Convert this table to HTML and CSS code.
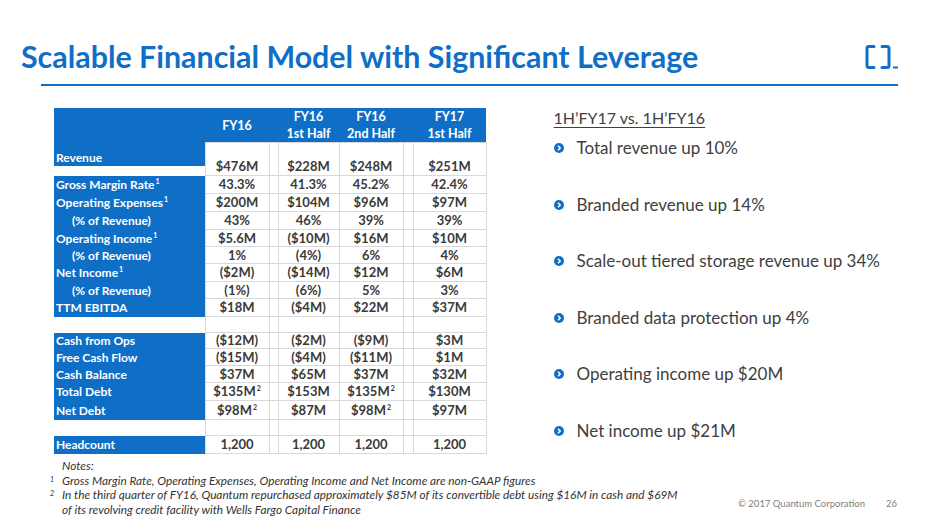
FILE: index.html
```html
<!DOCTYPE html>
<html lang="en">
<head>
<meta charset="utf-8">
<title>Scalable Financial Model with Significant Leverage</title>
<link rel="stylesheet" href="styles.css">
</head>
<body>
<div class="slide">
  <header class="top">
    <h1 class="title">Scalable Financial Model with Significant Leverage</h1>
    <svg class="logo" width="33" height="24" viewBox="0 0 33 24" aria-hidden="true">
      <path d="M9 1.5 H4 Q2 1.5 2 3.5 V20.5 Q2 22.5 4 22.5 H9" fill="none" stroke="#0f6fc6" stroke-width="3" stroke-linecap="round"/>
      <path d="M17 1.5 H22 Q24 1.5 24 3.5 V20.5 Q24 22.5 22 22.5 H17" fill="none" stroke="#0f6fc6" stroke-width="3" stroke-linecap="round"/>
      <rect x="28" y="21.5" width="5" height="2" fill="#0f6fc6"/>
    </svg>
  </header>
  <div class="rule"></div>

  <main class="content">
    <table class="fin">
      <colgroup>
        <col class="c-lbl"><col class="c-a"><col class="c-sp"><col class="c-b"><col class="c-c"><col class="c-sp2"><col class="c-d">
      </colgroup>
      <thead>
        <tr class="r-head">
          <th></th>
          <th>FY16</th>
          <th></th>
          <th>FY16<br>1st Half</th>
          <th>FY16<br>2nd Half</th>
          <th></th>
          <th>FY17<br>1st Half</th>
        </tr>
      </thead>
      <tbody>
        <tr class="r-rev">
          <td class="lbl top">Revenue</td>
          <td>$476M</td><td class="sp"></td><td>$228M</td><td>$248M</td><td class="sp"></td><td>$251M</td>
        </tr>
        <tr class="r18">
          <td class="lbl">Gross Margin Rate<sup>1</sup></td>
          <td>43.3%</td><td class="sp"></td><td>41.3%</td><td>45.2%</td><td class="sp"></td><td>42.4%</td>
        </tr>
        <tr class="r18">
          <td class="lbl">Operating Expenses<sup>1</sup></td>
          <td>$200M</td><td class="sp"></td><td>$104M</td><td>$96M</td><td class="sp"></td><td>$97M</td>
        </tr>
        <tr class="r18">
          <td class="lbl ind">(% of Revenue)</td>
          <td>43%</td><td class="sp"></td><td>46%</td><td>39%</td><td class="sp"></td><td>39%</td>
        </tr>
        <tr class="r17">
          <td class="lbl">Operating Income<sup>1</sup></td>
          <td>$5.6M</td><td class="sp"></td><td>($10M)</td><td>$16M</td><td class="sp"></td><td>$10M</td>
        </tr>
        <tr class="r17">
          <td class="lbl ind">(% of Revenue)</td>
          <td>1%</td><td class="sp"></td><td>(4%)</td><td>6%</td><td class="sp"></td><td>4%</td>
        </tr>
        <tr class="r18">
          <td class="lbl">Net Income<sup>1</sup></td>
          <td>($2M)</td><td class="sp"></td><td>($14M)</td><td>$12M</td><td class="sp"></td><td>$6M</td>
        </tr>
        <tr class="r17">
          <td class="lbl ind">(% of Revenue)</td>
          <td>(1%)</td><td class="sp"></td><td>(6%)</td><td>5%</td><td class="sp"></td><td>3%</td>
        </tr>
        <tr class="r18">
          <td class="lbl">TTM EBITDA</td>
          <td>$18M</td><td class="sp"></td><td>($4M)</td><td>$22M</td><td class="sp"></td><td>$37M</td>
        </tr>
        <tr class="r16 blank">
          <td class="lbl-blank"></td>
          <td></td><td class="sp"></td><td></td><td></td><td class="sp"></td><td></td>
        </tr>
        <tr class="r16">
          <td class="lbl">Cash from Ops</td>
          <td>($12M)</td><td class="sp"></td><td>($2M)</td><td>($9M)</td><td class="sp"></td><td>$3M</td>
        </tr>
        <tr class="r17">
          <td class="lbl">Free Cash Flow</td>
          <td>($15M)</td><td class="sp"></td><td>($4M)</td><td>($11M)</td><td class="sp"></td><td>$1M</td>
        </tr>
        <tr class="r17">
          <td class="lbl">Cash Balance</td>
          <td>$37M</td><td class="sp"></td><td>$65M</td><td>$37M</td><td class="sp"></td><td>$32M</td>
        </tr>
        <tr class="r18">
          <td class="lbl">Total Debt</td>
          <td>$135M<sup>2</sup></td><td class="sp"></td><td>$153M</td><td>$135M<sup>2</sup></td><td class="sp"></td><td>$130M</td>
        </tr>
        <tr class="r19">
          <td class="lbl">Net Debt</td>
          <td>$98M<sup>2</sup></td><td class="sp"></td><td>$87M</td><td>$98M<sup>2</sup></td><td class="sp"></td><td>$97M</td>
        </tr>
        <tr class="r16 blank">
          <td class="lbl-blank"></td>
          <td></td><td class="sp"></td><td></td><td></td><td class="sp"></td><td></td>
        </tr>
        <tr class="r18">
          <td class="lbl">Headcount</td>
          <td>1,200</td><td class="sp"></td><td>1,200</td><td>1,200</td><td class="sp"></td><td>1,200</td>
        </tr>
      </tbody>
    </table>

    <section class="points">
      <h2 class="points-head">1H’FY17 vs. 1H’FY16</h2>
      <ul class="bullets">
        <li><svg class="chev" width="10" height="10" viewBox="0 0 10 10" aria-hidden="true"><circle cx="5" cy="5" r="5" fill="#0f6fc6"/><path d="M4 2.8 L6.2 5 L4 7.2" fill="none" stroke="#fff" stroke-width="1.5"/></svg><span>Total revenue up 10%</span></li>
        <li><svg class="chev" width="10" height="10" viewBox="0 0 10 10" aria-hidden="true"><circle cx="5" cy="5" r="5" fill="#0f6fc6"/><path d="M4 2.8 L6.2 5 L4 7.2" fill="none" stroke="#fff" stroke-width="1.5"/></svg><span>Branded revenue up 14%</span></li>
        <li><svg class="chev" width="10" height="10" viewBox="0 0 10 10" aria-hidden="true"><circle cx="5" cy="5" r="5" fill="#0f6fc6"/><path d="M4 2.8 L6.2 5 L4 7.2" fill="none" stroke="#fff" stroke-width="1.5"/></svg><span>Scale-out tiered storage revenue up 34%</span></li>
        <li><svg class="chev" width="10" height="10" viewBox="0 0 10 10" aria-hidden="true"><circle cx="5" cy="5" r="5" fill="#0f6fc6"/><path d="M4 2.8 L6.2 5 L4 7.2" fill="none" stroke="#fff" stroke-width="1.5"/></svg><span>Branded data protection up 4%</span></li>
        <li><svg class="chev" width="10" height="10" viewBox="0 0 10 10" aria-hidden="true"><circle cx="5" cy="5" r="5" fill="#0f6fc6"/><path d="M4 2.8 L6.2 5 L4 7.2" fill="none" stroke="#fff" stroke-width="1.5"/></svg><span>Operating income up $20M</span></li>
        <li><svg class="chev" width="10" height="10" viewBox="0 0 10 10" aria-hidden="true"><circle cx="5" cy="5" r="5" fill="#0f6fc6"/><path d="M4 2.8 L6.2 5 L4 7.2" fill="none" stroke="#fff" stroke-width="1.5"/></svg><span>Net income up $21M</span></li>
      </ul>
    </section>
  </main>

  <footer class="bottom">
    <div class="notes">
      <p class="notes-title">Notes:</p>
      <p class="note"><span class="num">1</span><span>Gross Margin Rate, Operating Expenses, Operating Income and Net Income are non-GAAP figures</span></p>
      <p class="note"><span class="num">2</span><span>In the third quarter of FY16, Quantum repurchased approximately $85M of its convertible debt using $16M in cash and $69M of its revolving credit facility with Wells Fargo Capital Finance</span></p>
    </div>
    <div class="copy"><span>© 2017 Quantum Corporation</span><span class="page">26</span></div>
  </footer>
</div>
</body>
</html>
```

FILE: styles.css
```css
* { box-sizing: border-box; }

html, body {
  margin: 0;
  padding: 0;
  background: #ffffff;
}

.slide {
  width: 940px;
  height: 528px;
  overflow: hidden;
  font-family: Lato, "Open Sans", sans-serif;
  color: #404040;
}

.top {
  display: flex;
  justify-content: space-between;
  align-items: flex-start;
  padding: 38px 42px 0 21px;
}

.title {
  margin: 0;
  font-size: 30.4px;
  line-height: 36px;
  font-weight: 700;
  color: #0f6fc6;
  white-space: nowrap;
}

.logo {
  display: block;
  margin-top: 7px;
}

.rule {
  height: 2px;
  margin: 10px 42px 0 41px;
  background: #0f6fc6;
}

.content {
  display: flex;
  align-items: flex-start;
  padding: 22px 0 0 54px;
}

/* ---------- table ---------- */
.fin {
  width: 432px;
  table-layout: fixed;
  border-collapse: collapse;
  font-size: 13px;
  font-weight: 700;
  color: #3a3a3a;
}

.c-lbl { width: 151px; }
.c-a { width: 64px; }
.c-sp { width: 9px; }
.c-b { width: 61px; }
.c-c { width: 64px; }
.c-sp2 { width: 10px; }
.c-d { width: 73px; }

.fin th {
  background: #0f6fc6;
  color: #ffffff;
  font-size: 12.5px;
  font-weight: 700;
  text-align: center;
  line-height: 17px;
  padding: 0;
  height: 34px;
  border: none;
}

.fin td {
  padding: 0;
  text-align: center;
  border: 1px solid #d9d9d9;
  line-height: 15px;
  vertical-align: middle;
  white-space: nowrap;
}

.fin td.lbl {
  background: #0f6fc6;
  color: #ffffff;
  font-size: 12px;
  text-align: left;
  padding-left: 2px;
  border: none;
}

.fin td.lbl.ind { padding-left: 18px; }

.fin td.lbl-blank {
  background: #ffffff;
  border: none;
}

.r-rev { height: 33px; }
.r-rev td { vertical-align: bottom; padding-bottom: 1px; }
.r-rev td.lbl.top { vertical-align: top; padding-top: 7px; }

.r16 { height: 16px; }
.r17 { height: 17px; }
.r18 { height: 18px; }
.r19 { height: 19px; }

.fin sup {
  font-size: 7px;
  line-height: 0;
  vertical-align: 5px;
  margin-left: 1px;
}

/* ---------- bullets ---------- */
.points {
  margin-left: 67px;
  color: #404040;
}

.points-head {
  margin: 0;
  font-size: 16px;
  line-height: 20px;
  font-weight: 400;
  text-decoration: underline;
  text-decoration-thickness: 1px;
  text-underline-offset: 3px;
}

.bullets {
  list-style: none;
  margin: 10px 0 0 0;
  padding: 0;
  display: flex;
  flex-direction: column;
  gap: 36.6px;
}

.bullets li {
  display: flex;
  align-items: center;
  height: 20px;
  font-size: 17px;
  line-height: 20px;
}

.chev {
  display: block;
  flex: none;
  margin-right: 13px;
}

/* ---------- footer ---------- */
.bottom {
  display: flex;
  justify-content: space-between;
  align-items: flex-end;
  padding: 5px 43px 0 50px;
}

.notes {
  width: 632px;
  font-size: 11.8px;
  line-height: 14.7px;
  font-style: italic;
  color: #333333;
}

.notes p { margin: 0; }

.notes-title { padding-left: 12px; }

.note { display: flex; }

.note .num {
  flex: none;
  width: 12px;
  font-size: 7px;
  line-height: 10px;
}

.copy {
  display: flex;
  gap: 21px;
  font-size: 9.5px;
  line-height: 14px;
  color: #808080;
  margin-bottom: 7px;
}
```
